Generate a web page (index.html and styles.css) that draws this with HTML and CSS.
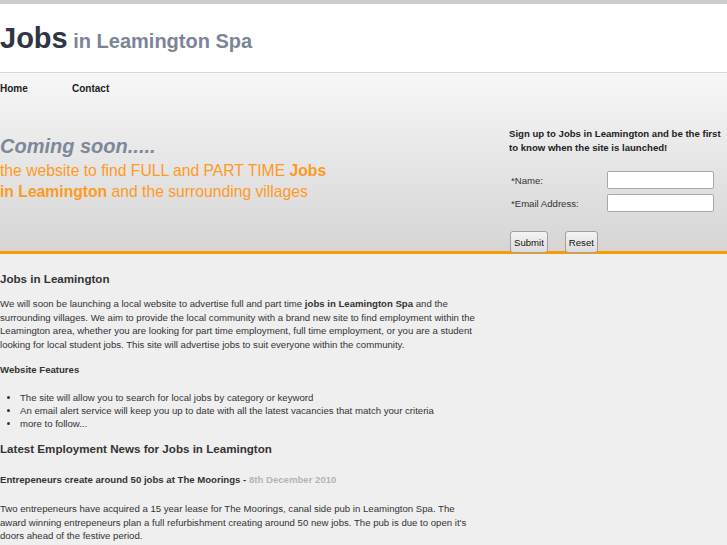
FILE: index.html
```html
<!DOCTYPE html>
<html>
<head>
<meta charset="utf-8">
<title>Jobs in Leamington Spa</title>
<link rel="stylesheet" href="styles.css">
</head>
<body>
<div class="topbar"></div>
<div class="header">
  <h1 class="logo"><span class="logo-main">Jobs</span> <span class="logo-sub">in Leamington Spa</span></h1>
</div>
<div class="band">
  <ul class="nav">
    <li><a href="#">Home</a></li>
    <li><a href="#">Contact</a></li>
  </ul>
  <div class="hero">
    <div class="hero-text">
      <h2 class="coming">Coming soon.....</h2>
      <p class="tagline">the website to find FULL and PART TIME <b>Jobs in Leamington</b> and the surrounding villages</p>
    </div>
    <form class="signup">
      <p class="signup-intro">Sign up to Jobs in Leamington and be the first to know when the site is launched!</p>
      <div class="field"><label>*Name:</label><input type="text"></div>
      <div class="field"><label>*Email Address:</label><input type="text"></div>
      <div class="buttons"><button type="button">Submit</button><button type="button">Reset</button></div>
    </form>
  </div>
</div>
<div class="content">
  <h3 class="intro-title">Jobs in Leamington</h3>
  <p class="intro">We will soon be launching a local website to advertise full and part time <b>jobs in Leamington Spa</b> and the surrounding villages. We aim to provide the local community with a brand new site to find employment within the Leamington area, whether you are looking for part time employment, full time employment, or you are a student looking for local student jobs. This site will advertise jobs to suit everyone within the community.</p>
  <p class="strong features-title">Website Features</p>
  <ul class="features">
    <li>The site will allow you to search for local jobs by category or keyword</li>
    <li>An email alert service will keep you up to date with all the latest vacancies that match your criteria</li>
    <li>more to follow...</li>
  </ul>
  <h3 class="news-title">Latest Employment News for Jobs in Leamington</h3>
  <p class="strong news-head">Entrepeneurs create around 50 jobs at The Moorings - <span class="date">8th December 2010</span></p>
  <p class="news-body">Two entrepeneurs have acquired a 15 year lease for The Moorings, canal side pub in Leamington Spa. The award winning entrepeneurs plan a full refurbishment creating around 50 new jobs. The pub is due to open it's doors ahead of the festive period.</p>
</div>
</body>
</html>
```

FILE: styles.css
```css
html, body {
  margin: 0;
  padding: 0;
  background: #efefef;
  font-family: "Liberation Sans", Arial, sans-serif;
  color: #333;
}
.topbar {
  height: 4px;
  background: #cccccc;
}
.header {
  background: #ffffff;
  height: 68px;
  border-bottom: 1px solid #d8d8d8;
}
.logo {
  margin: 0;
  padding-top: 17px;
  font-size: 20px;
  font-weight: bold;
  line-height: 34px;
}
.logo-main {
  font-size: 29px;
  color: #2f3542;
}
.logo-sub {
  font-size: 20px;
  color: #7a8697;
}
.band {
  height: 178px;
  background: linear-gradient(#f8f7f8, #d5d5d5);
  border-bottom: 3px solid #ff9900;
}
.nav {
  list-style: none;
  margin: 0;
  padding: 10px 0 0;
  display: flex;
  height: 18px;
  font-size: 10px;
  line-height: 12px;
}
.nav li {
  width: 72px;
}
.nav a {
  font-weight: bold;
  color: #222;
  text-decoration: none;
}
.hero {
  display: flex;
}
.hero-text {
  width: 509px;
  padding-top: 33px;
}
.coming {
  margin: 0;
  font-size: 20px;
  font-style: italic;
  font-weight: bold;
  color: #7d8898;
  line-height: 24px;
}
.tagline {
  margin: 1.5px 0 0;
  width: 340px;
  font-size: 15.7px;
  line-height: 21px;
  color: #ff9a1f;
}
.signup {
  width: 218px;
  padding-top: 26px;
  font-size: 9.6px;
}
.signup-intro {
  margin: 0 0 13.5px;
  font-weight: bold;
  line-height: 14px;
  color: #222;
}
.field {
  display: flex;
  align-items: center;
  height: 23px;
}
.field label {
  width: 96px;
  padding-left: 2px;
  color: #333;
}
.field input {
  width: 103px;
  height: 14px;
  padding: 1px;
  border: 1px solid #a8a8a8;
  border-radius: 2px;
  background: #fff;
}
.buttons {
  display: flex;
  gap: 17px;
  margin-top: 16.5px;
  padding-left: 1px;
}
.buttons button {
  font-family: "Liberation Sans", Arial, sans-serif;
  font-size: 9.6px;
  height: 22px;
  padding: 0 3px;
  border: 1px solid #a0a0a0;
  border-radius: 3px;
  background: linear-gradient(#f4f4f4, #dcdcdc);
  color: #111;
}
.content {
  width: 475px;
  padding-top: 17px;
  font-size: 9.6px;
  line-height: 13.5px;
}
.content h3 {
  margin: 0;
  font-size: 11.6px;
  color: #333;
  line-height: 16px;
}
.content p {
  margin: 0;
}
.intro {
  margin-top: 10px !important;
}
.strong {
  font-weight: bold;
}
.features-title {
  margin-top: 12px !important;
}
.features {
  margin: 14px 0 0;
  padding-left: 20px;
  line-height: 13px;
}
.news-title {
  margin-top: 11.5px !important;
}
.news-head {
  margin-top: 16px !important;
}
.date {
  color: #b5b5b5;
}
.news-body {
  margin-top: 15.5px !important;
}
```
